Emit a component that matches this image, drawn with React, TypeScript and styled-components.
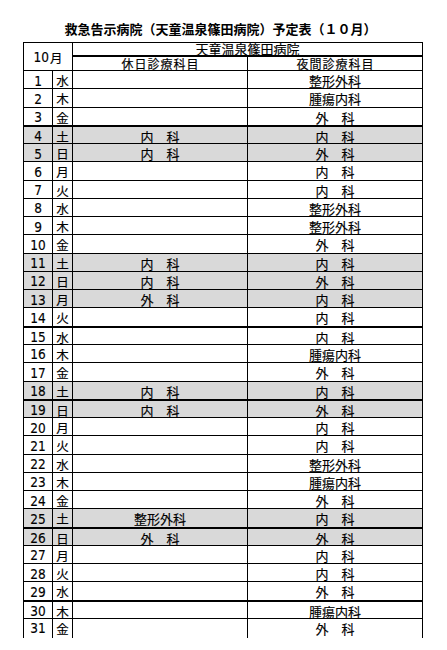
import styled, { createGlobalStyle } from 'styled-components';

type Day = {
  day: number;
  week: string;
  holiday: string;
  night: string;
  gray?: boolean;
  thick?: boolean;
};

const NAI = '内　科';
const GE = '外　科';
const SEI = '整形外科';
const SHU = '腫瘍内科';

const days: Day[] = [
  { day: 1, week: '水', holiday: '', night: SEI },
  { day: 2, week: '木', holiday: '', night: SHU },
  { day: 3, week: '金', holiday: '', night: GE },
  { day: 4, week: '土', holiday: NAI, night: NAI, gray: true, thick: true },
  { day: 5, week: '日', holiday: NAI, night: GE, gray: true },
  { day: 6, week: '月', holiday: '', night: NAI },
  { day: 7, week: '火', holiday: '', night: NAI },
  { day: 8, week: '水', holiday: '', night: SEI },
  { day: 9, week: '木', holiday: '', night: SEI },
  { day: 10, week: '金', holiday: '', night: GE },
  { day: 11, week: '土', holiday: NAI, night: NAI, gray: true },
  { day: 12, week: '日', holiday: NAI, night: GE, gray: true },
  { day: 13, week: '月', holiday: GE, night: NAI, gray: true },
  { day: 14, week: '火', holiday: '', night: NAI },
  { day: 15, week: '水', holiday: '', night: NAI, thick: true },
  { day: 16, week: '木', holiday: '', night: SHU },
  { day: 17, week: '金', holiday: '', night: GE },
  { day: 18, week: '土', holiday: NAI, night: NAI, gray: true },
  { day: 19, week: '日', holiday: NAI, night: GE, gray: true, thick: true },
  { day: 20, week: '月', holiday: '', night: NAI },
  { day: 21, week: '火', holiday: '', night: NAI },
  { day: 22, week: '水', holiday: '', night: SEI },
  { day: 23, week: '木', holiday: '', night: SHU },
  { day: 24, week: '金', holiday: '', night: GE },
  { day: 25, week: '土', holiday: SEI, night: NAI, gray: true },
  { day: 26, week: '日', holiday: GE, night: GE, gray: true, thick: true },
  { day: 27, week: '月', holiday: '', night: NAI },
  { day: 28, week: '火', holiday: '', night: NAI },
  { day: 29, week: '水', holiday: '', night: GE },
  { day: 30, week: '木', holiday: '', night: SHU, thick: true },
  { day: 31, week: '金', holiday: '', night: GE },
];

export default function App() {
  return (
    <>
      <GlobalStyle />
      <Page>
        <Title>救急告示病院（天童温泉篠田病院）予定表（１０月）</Title>
        <Header>
          <MonthCell>
            <Digits>10</Digits>月
          </MonthCell>
          <HospitalCell>天童温泉篠田病院</HospitalCell>
          <ColumnHead>休日診療科目</ColumnHead>
          <ColumnHead>夜間診療科目</ColumnHead>
        </Header>
        {days.map((d) => (
          <Row key={d.day} $gray={d.gray} $thick={d.thick}>
            <NumCell>{d.day}</NumCell>
            <WeekCell>{d.week}</WeekCell>
            <Cell>{d.holiday}</Cell>
            <Cell>{d.night}</Cell>
          </Row>
        ))}
      </Page>
    </>
  );
}

const GlobalStyle = createGlobalStyle`
  html, body {
    margin: 0;
    padding: 0;
    background: #fff;
  }
  body {
    font-family: "Noto Sans CJK JP", "Noto Sans", sans-serif;
    color: #000;
    -webkit-text-stroke: 0.15px #000;
  }
  * {
    box-sizing: border-box;
  }
`;

const Page = styled.div`
  width: 447px;
  height: 650px;
  padding: 22px 0 0 23px;
`;

const Title = styled.h1`
  width: 400px;
  margin: 0 0 7px;
  padding-right: 5px;
  font-size: 13px;
  line-height: 13px;
  font-weight: 700;
  text-align: center;
  white-space: nowrap;
  -webkit-text-stroke: 0;
`;

const Header = styled.div`
  display: grid;
  width: 400px;
  grid-template-columns: 49px 175px 176px;
  grid-template-rows: 12px 2px 13px;
  border-top: 1px solid #000;
`;

const Digits = styled.span`
  font-family: "Liberation Sans Narrow", "DejaVu Sans Condensed", "Liberation Sans", sans-serif;
  font-size: 13.5px;
  margin-right: 1px;
`;

const MonthCell = styled.div`
  grid-row: 1 / span 3;
  display: flex;
  align-items: center;
  justify-content: center;
  padding-top: 1px;
  border-left: 1px solid #000;
  font-size: 12.5px;
`;

const HospitalCell = styled.div`
  grid-column: 2 / span 2;
  grid-row: 1 / span 2;
  border-left: 1px solid #000;
  border-right: 1px solid #000;
  border-bottom: 2px solid #000;
  text-align: center;
  font-size: 13px;
  line-height: 12px;
  white-space: nowrap;
`;

const ColumnHead = styled.div`
  grid-row: 3;
  border-left: 1px solid #000;
  text-align: center;
  font-size: 12px;
  line-height: 13px;
  letter-spacing: 1px;
  padding-left: 1px;
  white-space: nowrap;

  &:last-child {
    border-right: 1px solid #000;
  }
`;

const Row = styled.div<{ $gray?: boolean; $thick?: boolean }>`
  display: grid;
  width: 400px;
  height: 18.27px;
  grid-template-columns: 29px 20px 175px 176px;
  border-top: ${(p) => (p.$thick ? '2px' : '1px')} solid #000;
  background: ${(p) => (p.$gray ? '#d9d9d9' : '#fff')};
`;

const Cell = styled.div`
  display: flex;
  align-items: center;
  justify-content: center;
  border-left: 1px solid #000;
  font-size: 13px;
  white-space: nowrap;

  &:last-child {
    border-right: 1px solid #000;
  }
`;

const NumCell = styled(Cell)`
  font-family: "Liberation Sans Narrow", "DejaVu Sans Condensed", "Liberation Sans", sans-serif;
  font-size: 13.5px;
`;

const WeekCell = styled(Cell)`
  font-size: 12.5px;
`;
